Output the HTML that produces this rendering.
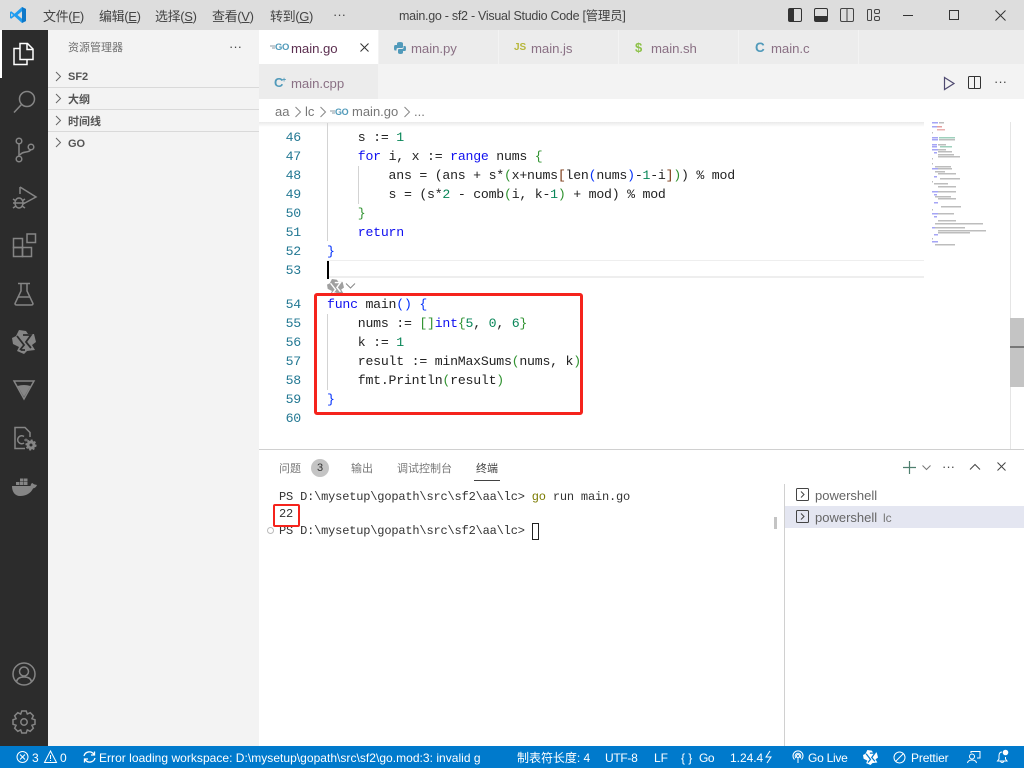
<!DOCTYPE html>
<html lang="zh"><head><meta charset="utf-8"><title>main.go - sf2 - Visual Studio Code</title>
<style>
html,body{margin:0;padding:0;width:1024px;height:768px;overflow:hidden;background:#fff}
body{position:relative;font-family:"Liberation Sans","Noto Sans CJK SC",sans-serif;font-size:13px;color:#333}
.a{position:absolute;white-space:pre;line-height:1}
.b{position:absolute}
svg{position:absolute;overflow:visible}
.mn{top:9px;font-size:13px;color:#444;line-height:15px;letter-spacing:-.35px}
.sb{font-size:11px;font-weight:bold;color:#555;left:68px;line-height:14px}
.hr{left:48px;width:211px;height:1px;background:#d9d9d9}
.tab{top:30px;width:119px;height:34px;background:#ececec}
.tn{top:41px;font-size:13.2px;color:#8a7084;line-height:16px;letter-spacing:-.05px}
.ln{left:270px;width:31px;text-align:right;font-family:"Liberation Mono",monospace;font-size:13.2px;letter-spacing:-.22px;color:#237893;line-height:19px;height:19px}
.c{left:327px;font-family:"Liberation Mono",monospace;font-size:13.2px;letter-spacing:-.22px;color:#222;line-height:19px;height:19px}
.k{color:#1010f0}.n{color:#098658}.p1{color:#0431fa}.p2{color:#319331}.p3{color:#7b3814}
.t{left:279px;font-family:"Liberation Mono",monospace;font-size:12px;letter-spacing:-.18px;color:#333;line-height:17px;height:17px}
.s{top:751px;color:#fff;font-size:12px;line-height:14px;letter-spacing:-.03px}
.pt{top:462px;font-size:11px;color:#777;line-height:14px}
</style></head><body>
<!-- title bar -->
<div class="b" style="left:0;top:0;width:1024px;height:30px;background:#dddddd"></div>
<svg style="left:9px;top:6px" width="18" height="18" viewBox="0 0 18 18"><path d="M13 1L17 3V15L13 17L5.500 10.300L2.200 12.800L1 12V6L2.200 5.200L5.500 7.700Z" fill="#1f9cf0"/><path d="M13 5.200L8.500 9L13 12.800Z" fill="#dddddd"/><path d="M2.200 7.200V10.800L4 9Z" fill="#dddddd"/><path d="M13 1L17 3V15L13 17Z" fill="#0f78c8"/></svg>
<div class="a mn" style="left:43px">文件(<u>F</u>)</div>
<div class="a mn" style="left:99px">编辑(<u>E</u>)</div>
<div class="a mn" style="left:155px">选择(<u>S</u>)</div>
<div class="a mn" style="left:212px">查看(<u>V</u>)</div>
<div class="a mn" style="left:270px">转到(<u>G</u>)</div>
<div class="a mn" style="left:333px;top:7px;letter-spacing:0">···</div>
<div class="a" style="left:399px;top:8px;font-size:12.5px;letter-spacing:-.27px;color:#444;line-height:16px">main.go - sf2 - Visual Studio Code [管理员]</div>
<svg style="left:788px;top:8px" width="16" height="15"><rect x=".5" y=".5" width="13" height="13" rx="1.500" fill="none" stroke="#333"/><rect x="1" y="1" width="5" height="12" fill="#333"/></svg>
<svg style="left:814px;top:8px" width="16" height="15"><rect x=".5" y=".5" width="13" height="13" rx="1.500" fill="none" stroke="#333"/><rect x="1" y="8" width="12" height="5" fill="#333"/></svg>
<svg style="left:840px;top:8px" width="16" height="15"><rect x=".5" y=".5" width="13" height="13" rx="1.500" fill="none" stroke="#444"/><path d="M7 1V13" stroke="#444"/></svg>
<svg style="left:867px;top:8px" width="16" height="15" fill="none" stroke="#444"><rect x=".5" y="1.500" width="4" height="11" rx="1"/><rect x="7.500" y="1.500" width="5" height="4" rx="1.500"/><rect x="7.500" y="8.500" width="5" height="4" rx="1.500"/></svg>
<div class="b" style="left:903px;top:15px;width:10px;height:1px;background:#333"></div>
<div class="b" style="left:949px;top:10px;width:8px;height:8px;border:1px solid #333"></div>
<svg style="left:995px;top:10px" width="11" height="11"><path d="M.5 .5L10.500 10.500M10.500 .5L.5 10.500" stroke="#333"/></svg>

<!-- activity bar -->
<div class="b" style="left:0;top:30px;width:48px;height:716px;background:#2c2c2c"></div>
<div class="b" style="left:0;top:30px;width:2px;height:48px;background:#fff"></div>
<svg style="left:12px;top:41px" width="24" height="26" fill="none" stroke="#fff" stroke-width="1.500"><path d="M8 2.500H15.500L21 8V18.500H8Z"/><path d="M15 2.500V8.500H21"/><path d="M8 7.500H2V23.500H15V18.500"/></svg>
<svg style="left:12px;top:89px" width="24" height="26" fill="none" stroke="#858585" stroke-width="1.500"><circle cx="15" cy="10" r="7.500"/><path d="M9.500 15.500L2 23.500"/></svg>
<svg style="left:12px;top:137px" width="24" height="26" fill="none" stroke="#858585" stroke-width="1.500"><circle cx="7" cy="4" r="2.800"/><circle cx="7" cy="22" r="2.800"/><circle cx="19" cy="10" r="2.800"/><path d="M7 7V19M8 18C10 14 17 16 18.500 13"/></svg>
<svg style="left:12px;top:185px" width="26" height="26" fill="none" stroke="#858585" stroke-width="1.500"><path d="M8 2L24 12L11 19"/><path d="M8 2V9"/><ellipse cx="7" cy="18" rx="4" ry="5"/><path d="M1 14L4 16M13 14L10 16M1 18H3M13 18H11M1 23L4 21M13 23L10 21M3 18H11"/></svg>
<svg style="left:12px;top:233px" width="25" height="25" fill="none" stroke="#858585" stroke-width="1.500"><rect x="1.500" y="5.500" width="9" height="9"/><rect x="1.500" y="14.500" width="9" height="9"/><rect x="10.500" y="14.500" width="9" height="9"/><rect x="15" y="1" width="8.500" height="8.500"/></svg>
<svg style="left:13px;top:282px" width="22" height="24" fill="none" stroke="#858585" stroke-width="1.500"><path d="M5 1.500H17M8 1.500V9L2 21.500Q2 23 4 23H18Q20 23 20 21.500L14 9V1.500"/><path d="M5 15H17"/></svg>
<svg style="left:12px;top:330px" width="24" height="24" viewBox="0 0 24 24"><path d="M7 0L14 1L16 4L22 4L24 12L20 15L23 20L15 21L12 24L5 21L7 17L1 14L0 8L4 6Z" fill="#858585"/><path d="M5 6L12 15L8 20M11 5H19L14 12L19 18M13 20H9" stroke="#2c2c2c" stroke-width="1.800" fill="none"/></svg>
<svg style="left:13px;top:380px" width="22" height="20"><path d="M1 1H21L11 19Z" fill="none" stroke="#858585" stroke-width="1.500"/><path d="M4.500 6Q11 4 17.500 6L11 17Z" fill="#858585"/></svg>
<svg style="left:13px;top:426px" width="24" height="26" fill="none" stroke="#858585" stroke-width="1.500"><path d="M12 22.500H2V1.500H12L17 6.500V11"/><path d="M11 10.500A4 4 0 1 0 11 17"/><path d="M11 14H15M13 12.500V15.500" stroke-width="1"/><circle cx="18" cy="19" r="3" stroke-width="3"/><circle cx="18" cy="19" r="4.800" stroke-width="1.500" stroke-dasharray="2 1.700"/></svg>
<svg style="left:12px;top:477px" width="25" height="20"><path d="M0 9H18.500C19 6 20.500 5.500 21.500 7C22.500 7.800 24 7.500 25 8C24 10.500 22.500 11 21 11.500C19 16 14 19 8 19C3 19 0 15 0 9Z" fill="#858585"/><path d="M4 5H7.500V8H4ZM8 5H11.500V8H8ZM12 5H15.500V8H12ZM8 1.500H11.500V4.500H8ZM12 1.500H15.500V4.500H12Z" fill="#858585"/></svg>
<svg style="left:12px;top:662px" width="25" height="25" fill="none" stroke="#858585" stroke-width="1.500"><circle cx="12" cy="12" r="11"/><circle cx="12" cy="9.500" r="4.500"/><path d="M4.500 20C5 16 8 15 12 15C16 15 19 16 19.500 20"/></svg>
<svg style="left:12px;top:710px" width="25" height="25" fill="none" stroke="#858585" stroke-width="1.500"><circle cx="12" cy="12" r="3.200"/><path d="M14.200 1L15.300 4L18.220 2.670L21.330 5.780L19.920 8.700L23 9.800V14.200L19.920 15.300L21.330 18.220L18.220 21.330L15.300 19.920L14.200 23H9.800L8.700 19.920L5.780 21.330L2.670 18.220L4.080 15.300L1 14.200V9.800L4.080 8.700L2.670 5.780L5.780 2.670L8.700 4.080L9.800 1Z"/></svg>

<!-- sidebar -->
<div class="b" style="left:48px;top:30px;width:211px;height:716px;background:#f3f3f3"></div>
<div class="a" style="left:68px;top:41px;font-size:11px;color:#6f6f6f;line-height:14px">资源管理器</div>
<div class="a" style="left:229px;top:40px;font-size:13px;color:#444;line-height:14px">···</div>
<div class="a sb" style="top:70px">SF2</div>
<div class="a sb" style="top:93px">大纲</div>
<div class="a sb" style="top:115px">时间线</div>
<div class="a sb" style="top:137px">GO</div>
<div class="b hr" style="top:87px"></div><div class="b hr" style="top:109px"></div><div class="b hr" style="top:131px"></div>
<svg style="left:55px;top:71px" width="10" height="90" fill="none" stroke="#666"><path d="M1 1L5.500 5.500L1 10M1 23L5.500 27.500L1 32M1 45L5.500 49.500L1 54M1 67L5.500 71.500L1 76"/></svg>

<!-- tabs -->
<div class="b" style="left:259px;top:30px;width:765px;height:34px;background:#ececec"></div>
<div class="b" style="left:259px;top:64px;width:765px;height:35px;background:#f3f3f3"></div>
<div class="b tab" style="left:259px;background:#fff"></div>
<div class="b" style="left:378px;top:30px;width:1px;height:34px;background:#f3f3f3"></div>
<div class="b" style="left:498px;top:30px;width:1px;height:34px;background:#f3f3f3"></div>
<div class="b" style="left:618px;top:30px;width:1px;height:34px;background:#f3f3f3"></div>
<div class="b" style="left:738px;top:30px;width:1px;height:34px;background:#f3f3f3"></div>
<div class="b" style="left:858px;top:30px;width:1px;height:34px;background:#f3f3f3"></div>
<div class="b" style="left:259px;top:64px;width:119px;height:35px;background:#ececec"></div>
<svg style="left:270px;top:43px" width="8" height="8"><path d="M0 3H5M2 5H5" stroke="#8a9aa3"/></svg>
<div class="a" style="left:275px;top:42px;font-size:9.500px;font-weight:bold;color:#519aba;line-height:12px;letter-spacing:-.4px">GO</div>
<div class="a tn" style="left:291px;color:#5c2f50">main.go</div>
<svg style="left:360px;top:43px" width="9" height="9"><path d="M.5 .5L8.500 8.500M8.500 .5L.5 8.500" stroke="#333"/></svg>
<svg style="left:393px;top:41px" width="14" height="14"><path d="M4 4V2.500Q4 1 7 1Q10 1 10 2.500V6Q10 7 9 7H5Q3.500 7 3.500 8.500V9.500H2Q1 9.500 1 7Q1 4 2 4Z" fill="#519aba"/><path d="M10.500 5V6.500Q10.500 8 9 8H6Q5 8 5 9V11.500Q5 13 7.500 13Q10 13 10 11.500V10H12Q13 10 13 7.500Q13 5 12 5Z" fill="#519aba"/></svg>
<div class="a tn" style="left:411px">main.py</div>
<div class="a" style="left:514px;top:42px;font-size:10px;font-weight:bold;color:#b7b73b;line-height:11px">JS</div>
<div class="a tn" style="left:531px">main.js</div>
<div class="a" style="left:635px;top:40px;font-size:13px;font-weight:bold;color:#8dc149;line-height:15px">$</div>
<div class="a tn" style="left:651px">main.sh</div>
<div class="a" style="left:755px;top:40px;font-size:13.500px;font-weight:bold;color:#519aba;line-height:15px">C</div>
<div class="a tn" style="left:771px">main.c</div>
<div class="a" style="left:274px;top:75px;font-size:13px;font-weight:bold;color:#519aba;line-height:15px">C</div>
<div class="a" style="left:282px;top:76px;font-size:7px;font-weight:bold;color:#519aba;line-height:9px">+</div>
<div class="a tn" style="left:291px;top:76px">main.cpp</div>
<svg style="left:943px;top:76px" width="13" height="15"><path d="M1.500 1.500L11 7.500L1.500 13.500Z" fill="none" stroke="#4f4a70" stroke-width="1.200"/></svg>
<svg style="left:968px;top:76px" width="15" height="14" fill="none" stroke="#333"><rect x=".5" y=".5" width="12" height="12" rx="1"/><path d="M6.500 .5V12.500"/></svg>
<div class="a" style="left:994px;top:75px;font-size:13px;color:#444;line-height:14px">···</div>

<!-- breadcrumb -->
<div class="a" style="left:275px;top:104px;font-size:13px;color:#777;line-height:15px">aa</div>
<svg style="left:294px;top:106px" width="8" height="12" fill="none" stroke="#888"><path d="M1.500 1L6.500 6L1.500 11"/></svg>
<div class="a" style="left:305px;top:104px;font-size:13px;color:#777;line-height:15px">lc</div>
<svg style="left:319px;top:106px" width="8" height="12" fill="none" stroke="#888"><path d="M1.500 1L6.500 6L1.500 11"/></svg>
<svg style="left:330px;top:109px" width="6" height="6"><path d="M0 2H5M2 4H5" stroke="#8a9aa3"/></svg>
<div class="a" style="left:335px;top:107px;font-size:9px;font-weight:bold;color:#519aba;line-height:11px;letter-spacing:-.4px">GO</div>
<div class="a" style="left:352px;top:104px;font-size:13px;color:#777;line-height:15px">main.go</div>
<svg style="left:403px;top:106px" width="8" height="12" fill="none" stroke="#888"><path d="M1.500 1L6.500 6L1.500 11"/></svg>
<div class="a" style="left:414px;top:104px;font-size:13px;color:#777;line-height:15px">...</div>

<!-- editor -->
<div class="b" style="left:259px;top:122px;width:765px;height:327px;overflow:hidden;background:#fff">
  <div class="a" style="left:186px;top:-14px;font-family:'Liberation Mono',monospace;font-size:13.200px;letter-spacing:-.22px;line-height:19px;color:#319331">(    )</div>
  <div class="b" style="left:0;top:0;width:665px;height:5px;background:linear-gradient(#e9e9e9,#fff)"></div>
</div>
<div class="b" style="left:327px;top:123px;width:1px;height:118px;background:#d3d3d3"></div>
<div class="b" style="left:358px;top:166px;width:1px;height:38px;background:#d3d3d3"></div>
<div class="b" style="left:327px;top:314px;width:1px;height:76px;background:#d3d3d3"></div>
<div class="a ln" style="top:128px">46</div><div class="a c" style="top:128px">    s := <span class="n">1</span></div>
<div class="a ln" style="top:147px">47</div><div class="a c" style="top:147px">    <span class="k">for</span> i, x := <span class="k">range</span> nums <span class="p2">{</span></div>
<div class="a ln" style="top:166px">48</div><div class="a c" style="top:166px">        ans = (ans + s*<span class="p2">(</span>x+nums<span class="p3">[</span>len<span class="p1">(</span>nums<span class="p1">)</span>-<span class="n">1</span>-i<span class="p3">]</span><span class="p2">)</span>) % mod</div>
<div class="a ln" style="top:185px">49</div><div class="a c" style="top:185px">        s = (s*<span class="n">2</span> - comb<span class="p2">(</span>i, k-<span class="n">1</span><span class="p2">)</span> + mod) % mod</div>
<div class="a ln" style="top:204px">50</div><div class="a c" style="top:204px">    <span class="p2">}</span></div>
<div class="a ln" style="top:223px">51</div><div class="a c" style="top:223px">    <span class="k">return</span></div>
<div class="a ln" style="top:242px">52</div><div class="a c" style="top:242px"><span class="p1">}</span></div>
<div class="b" style="left:327px;top:260px;width:597px;height:18px;border-top:1px solid #eee;border-bottom:2px solid #eee;box-sizing:border-box"></div>
<div class="a ln" style="top:261px">53</div>
<div class="b" style="left:327px;top:261px;width:2px;height:18px;background:#000"></div>
<svg style="left:327px;top:279px" width="17" height="17" viewBox="0 0 24 24"><path d="M7 0L14 1L16 4L22 4L24 12L20 15L23 20L15 21L12 24L5 21L7 17L1 14L0 8L4 6Z" fill="#a0a0a0"/><path d="M5 6L12 15L8 20M11 5H19L14 12L19 18M13 20H9" stroke="#fff" stroke-width="2" fill="none"/></svg>
<svg style="left:345px;top:282px" width="12" height="8"><path d="M1 1.500L5.500 6L10 1.500" fill="none" stroke="#888"/></svg>
<div class="a ln" style="top:295px">54</div><div class="a c" style="top:295px"><span class="k">func</span> main<span class="p1">()</span> <span class="p1">{</span></div>
<div class="a ln" style="top:314px">55</div><div class="a c" style="top:314px">    nums := <span class="p2">[]</span><span class="k">int</span><span class="p2">{</span><span class="n">5</span>, <span class="n">0</span>, <span class="n">6</span><span class="p2">}</span></div>
<div class="a ln" style="top:333px">56</div><div class="a c" style="top:333px">    k := <span class="n">1</span></div>
<div class="a ln" style="top:352px">57</div><div class="a c" style="top:352px">    result := minMaxSums<span class="p2">(</span>nums, k<span class="p2">)</span></div>
<div class="a ln" style="top:371px">58</div><div class="a c" style="top:371px">    fmt.Println<span class="p2">(</span>result<span class="p2">)</span></div>
<div class="a ln" style="top:390px">59</div><div class="a c" style="top:390px"><span class="p1">}</span></div>
<div class="a ln" style="top:409px">60</div>
<div class="b" style="left:314px;top:293px;width:269px;height:122px;border:3px solid #f5231c;border-radius:3px;box-sizing:border-box"></div>

<!-- minimap -->
<svg style="left:932px;top:122px" width="60" height="125">
<g fill="#a5a5f5"><rect x="0" y="0" width="6" height="1.500"/><rect x="0" y="4" width="6" height="1.500"/><rect x="0" y="15" width="6" height="1.500"/><rect x="0" y="17" width="6" height="1.500"/><rect x="0" y="22" width="5" height="1.500"/><rect x="0" y="24" width="5" height="1.500"/><rect x="0" y="27" width="6" height="1.500"/><rect x="2" y="30" width="3" height="1.500"/><rect x="0" y="46" width="6" height="1.500"/><rect x="2" y="54" width="3" height="1.500"/><rect x="0" y="69" width="6" height="1.500"/><rect x="2" y="72" width="3" height="1.500"/><rect x="2" y="80" width="4" height="1.500"/><rect x="0" y="91" width="6" height="1.500"/><rect x="2" y="94" width="3" height="1.500"/><rect x="0" y="105" width="6" height="1.500"/><rect x="2" y="112" width="4" height="1.500"/><rect x="0" y="119" width="6" height="1.500"/></g>
<g fill="#bdbdbd"><rect x="7" y="0" width="5" height="1.500"/><rect x="0" y="10" width="1" height="1.500"/><rect x="7" y="17" width="16" height="1.500"/><rect x="6" y="22" width="8" height="1.500"/><rect x="6" y="27" width="8" height="1.500"/><rect x="6" y="29" width="14" height="1.500"/><rect x="6" y="32" width="16" height="1.500"/><rect x="6" y="34" width="22" height="1.500"/><rect x="0" y="36" width="1" height="1.500"/><rect x="0" y="41" width="1" height="1.500"/><rect x="3" y="44" width="16" height="1.500"/><rect x="6" y="46" width="14" height="1.500"/><rect x="3" y="49" width="10" height="1.500"/><rect x="6" y="51" width="18" height="1.500"/><rect x="8" y="56" width="20" height="1.500"/><rect x="0" y="59" width="1" height="1.500"/><rect x="2" y="61" width="14" height="1.500"/><rect x="6" y="64" width="18" height="1.500"/><rect x="6" y="69" width="18" height="1.500"/><rect x="3" y="74" width="16" height="1.500"/><rect x="6" y="76" width="18" height="1.500"/><rect x="9" y="84" width="20" height="1.500"/><rect x="0" y="87" width="1" height="1.500"/><rect x="6" y="91" width="16" height="1.500"/><rect x="6" y="98" width="18" height="1.500"/><rect x="3" y="101" width="48" height="1.500"/><rect x="3" y="105" width="30" height="1.500"/><rect x="6" y="108" width="48" height="1.500"/><rect x="6" y="110" width="32" height="1.500"/><rect x="0" y="116" width="1" height="1.500"/><rect x="3" y="122" width="20" height="1.500"/></g>
<rect x="5" y="4" width="5" height="1.500" fill="#e5a0a0"/><rect x="5" y="7" width="8" height="1.500" fill="#eab0b0"/>
<rect x="7" y="15" width="16" height="1.500" fill="#9ed0bc"/><rect x="8" y="24" width="12" height="1.500" fill="#9ed0bc"/>
</svg>
<div class="b" style="left:1010px;top:122px;width:1px;height:327px;background:#e5e5e5"></div>
<div class="b" style="left:1010px;top:318px;width:14px;height:69px;background:#c4c4c4"></div>
<div class="b" style="left:1010px;top:346px;width:14px;height:2px;background:#777"></div>

<!-- panel -->
<div class="b" style="left:259px;top:449px;width:765px;height:1px;background:#d0d0d0"></div>
<div class="a pt" style="left:279px">问题</div>
<div class="a" style="left:311px;top:459px;width:18px;height:18px;border-radius:9px;background:#c4c4c4;color:#333;font-size:11px;line-height:18px;text-align:center">3</div>
<div class="a pt" style="left:351px">输出</div>
<div class="a pt" style="left:397px">调试控制台</div>
<div class="a pt" style="left:476px;color:#424242">终端</div>
<div class="b" style="left:474px;top:480px;width:26px;height:1px;background:#424242"></div>
<svg style="left:903px;top:461px" width="14" height="14"><path d="M0 6.500H13M6.500 0V13" stroke="#4f7f6f" stroke-width="1.200"/></svg>
<svg style="left:922px;top:465px" width="9" height="6"><path d="M.5 .5L4.500 4.500L8.500 .5" fill="none" stroke="#777"/></svg>
<div class="a" style="left:942px;top:460px;font-size:13px;color:#444;line-height:14px">···</div>
<svg style="left:969px;top:463px" width="12" height="8"><path d="M1 6.500L6 1.500L11 6.500" fill="none" stroke="#444"/></svg>
<svg style="left:997px;top:462px" width="10" height="10"><path d="M.5 .5L8.500 8.500M8.500 .5L.5 8.500" stroke="#444"/></svg>
<div class="a t" style="top:489px">PS D:\mysetup\gopath\src\sf2\aa\lc&gt; <span style="color:#7a7a00">go</span> run main.go</div>
<div class="a t" style="top:506px">22</div>
<div class="a t" style="top:523px">PS D:\mysetup\gopath\src\sf2\aa\lc&gt;</div>
<div class="b" style="left:532px;top:523px;width:5px;height:15px;border:1px solid #222"></div>
<div class="b" style="left:267px;top:527px;width:5px;height:5px;border:1px solid #bbb;border-radius:50%"></div>
<div class="b" style="left:273px;top:504px;width:27px;height:23px;border:2.500px solid #f5231c;border-radius:2px;box-sizing:border-box"></div>
<div class="b" style="left:774px;top:517px;width:3px;height:12px;background:#c4c4c4"></div>
<div class="b" style="left:784px;top:484px;width:1px;height:262px;background:#d0d0d0"></div>
<div class="b" style="left:785px;top:506px;width:239px;height:22px;background:#e4e6f1"></div>
<svg style="left:796px;top:488px" width="14" height="14" fill="none" stroke="#444"><rect x=".5" y=".5" width="12" height="12" rx="1"/><path d="M5 3.500L8 6.500L5 9.500"/></svg>
<svg style="left:796px;top:510px" width="14" height="14" fill="none" stroke="#444"><rect x=".5" y=".5" width="12" height="12" rx="1"/><path d="M5 3.500L8 6.500L5 9.500"/></svg>
<div class="a" style="left:815px;top:488px;font-size:13px;color:#666;line-height:15px">powershell</div>
<div class="a" style="left:815px;top:510px;font-size:13px;color:#666;line-height:15px">powershell</div>
<div class="a" style="left:883px;top:511px;font-size:12px;color:#777;line-height:14px">lc</div>

<!-- status -->
<div class="b" style="left:0;top:746px;width:1024px;height:22px;background:#007acc"></div>
<svg style="left:16px;top:750px" width="14" height="14" fill="none" stroke="#fff"><circle cx="6.500" cy="7" r="5.500"/><path d="M4 4.500L9 9.500M9 4.500L4 9.500"/></svg>
<div class="a s" style="left:32px">3</div>
<svg style="left:44px;top:750px" width="14" height="14" fill="none" stroke="#fff"><path d="M6.500 1L12.500 12.500H.5Z"/><path d="M6.500 5V9M6.500 10V11"/></svg>
<div class="a s" style="left:60px">0</div>
<svg style="left:82px;top:750px" width="15" height="14" fill="none" stroke="#fff" stroke-width="1.300"><path d="M2 6A5.500 5.500 0 0 1 12 4.500M13 8A5.500 5.500 0 0 1 3 9.500"/><path d="M12.500 1.500V5H9M2.500 12.500V9H6"/></svg>
<div class="b" style="left:99px;top:746px;width:381px;height:22px;overflow:hidden"><div class="a s" style="left:0;top:5px;letter-spacing:.03px">Error loading workspace: D:\mysetup\gopath\src\sf2\go.mod:3: invalid g</div></div>
<div class="a s" style="left:517px">制表符长度: 4</div>
<div class="a s" style="left:605px;letter-spacing:-.3px">UTF-8</div>
<div class="a s" style="left:654px">LF</div>
<div class="a s" style="left:681px">{ }</div>
<div class="a s" style="left:699px;letter-spacing:-.5px">Go</div>
<div class="a s" style="left:730px">1.24.4</div>
<svg style="left:764px;top:750px" width="10" height="14" fill="none" stroke="#fff"><path d="M6 1L2 7H7L3 13"/></svg>
<svg style="left:791px;top:750px" width="14" height="14" fill="none" stroke="#fff"><circle cx="7" cy="6" r="1.500"/><path d="M3.500 9.500A5 5 0 1 1 10.500 9.500M5 8A2.800 2.800 0 1 1 9 8M7 8V13"/></svg>
<div class="a s" style="left:808px;letter-spacing:-.25px">Go Live</div>
<svg style="left:863px;top:750px" width="15" height="15" viewBox="0 0 24 24"><path d="M7 0L14 1L16 4L22 4L24 12L20 15L23 20L15 21L12 24L5 21L7 17L1 14L0 8L4 6Z" fill="#fff"/><path d="M5 6L12 15L8 20M11 5H19L14 12L19 18" stroke="#007acc" stroke-width="2" fill="none"/></svg>
<svg style="left:893px;top:751px" width="13" height="13" fill="none" stroke="#fff"><circle cx="6.500" cy="6.500" r="5.500"/><path d="M2.500 10.500L10.500 2.500"/></svg>
<div class="a s" style="left:911px;letter-spacing:-.15px">Prettier</div>
<svg style="left:966px;top:750px" width="15" height="14" fill="none" stroke="#fff"><path d="M5 3V1.500H14V8H11"/><circle cx="6" cy="6.500" r="2.500"/><path d="M1.500 13C2 10.500 4 10 6 10C8 10 10 10.500 10.500 13"/></svg>
<svg style="left:996px;top:749px" width="14" height="15"><path d="M6 3C3.500 3 3 5 3 7V10L1.500 12H11L9.500 10V8M4.500 12.500Q6 14.500 8 12.500" fill="none" stroke="#fff"/><circle cx="9.500" cy="3.500" r="2.800" fill="#fff"/></svg>
</body></html>
